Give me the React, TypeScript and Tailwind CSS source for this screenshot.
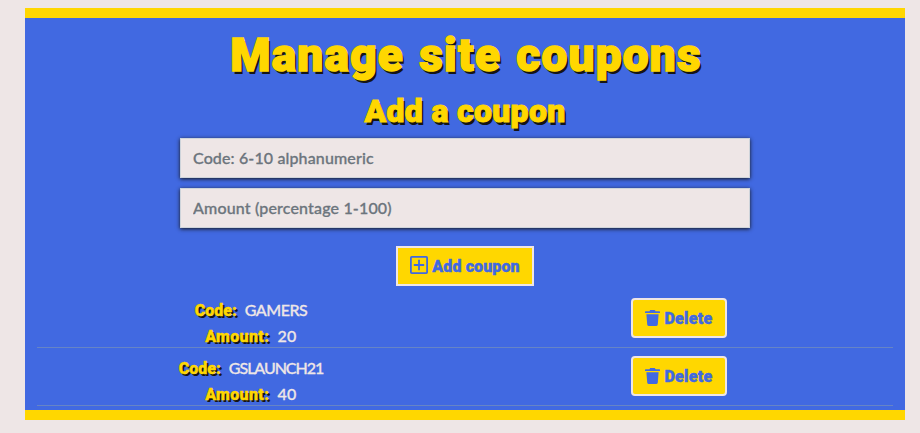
import React from "react";

const display = "font-['Roboto',sans-serif] font-black";
const body = "font-['Lato',sans-serif] font-medium [-webkit-text-stroke:0.3px_currentColor]";
const titleShadow = "[text-shadow:2px_3px_0_#151515]";
const labelShadow = "[text-shadow:2px_2px_0_#151515] [-webkit-text-stroke:0.4px_currentColor]";

function Field({ placeholder, tracking }: { placeholder: string; tracking: string }) {
  return (
    <input
      placeholder={placeholder}
      className={`block h-10 w-[570px] border border-[#ced4da] bg-[#eee6e6] px-3 pb-0.5 text-base text-[#6c757d] placeholder:text-[#6c757d] shadow-[0_1px_4px_#151515] outline-none ${body} ${tracking}`}
    />
  );
}

function TrashIcon() {
  return (
    <svg className="h-4 w-[15px] shrink-0" viewBox="0 0 15 16" fill="#4169e1">
      <path d="M5.2 0h4.6l.8 1.2H14.4q.6 0 .6.6V3H0V1.8q0-.6.6-.6h3.8z" />
      <path d="M1.4 4.2h12.2l-.8 10.4a1.4 1.4 0 0 1-1.4 1.4H3.6a1.4 1.4 0 0 1-1.4-1.4z" />
    </svg>
  );
}

function AddIcon() {
  return (
    <svg className="mb-0.5 h-[18px] w-[18px] shrink-0" viewBox="0 0 18 18" fill="none" stroke="#4169e1" strokeWidth="1.8">
      <rect x="0.9" y="0.9" width="16.2" height="16.2" rx="0.8" />
      <path d="M9 3.8v10.4M3.8 9h10.4" />
    </svg>
  );
}

type Coupon = { code: string; amount: number; tracking: string };

const coupons: Coupon[] = [
  { code: "GAMERS", amount: 20, tracking: "tracking-[-0.5px]" },
  { code: "GSLAUNCH21", amount: 40, tracking: "tracking-[-1.05px]" },
];

function Line({ label, value, tracking, labelTracking }: { label: string; value: string | number; tracking: string; labelTracking: string }) {
  return (
    <p className="flex h-[26px] items-center justify-center gap-2 whitespace-nowrap leading-[26px]">
      <span className={`${display} ${labelShadow} ${labelTracking} text-base text-[#ffd700]`}>{label}</span>
      <span className={`${body} mb-0.5 text-base text-[#eee6e6] ${tracking}`}>{value}</span>
    </p>
  );
}

function Row({ coupon }: { coupon: Coupon }) {
  return (
    <li className="flex h-[58px] border-b border-[#6684c5]">
      <div className="w-[428px] pt-2">
        <Line label="Code:" value={coupon.code} tracking={coupon.tracking} labelTracking="tracking-[0px]" />
        <Line label="Amount:" value={coupon.amount} tracking="tracking-[0.4px]" labelTracking="tracking-[0.35px]" />
      </div>
      <div className="flex w-[428px] justify-center pt-2">
        <button className={`flex h-10 w-24 items-center justify-center gap-1 rounded border-2 border-[#eee6e6] bg-[#ffd700] text-base tracking-[0.3px] text-[#4169e1] [-webkit-text-stroke:0.4px_currentColor] ${display}`}>
          <TrashIcon />
          <span className="pt-px">Delete</span>
        </button>
      </div>
    </li>
  );
}

export default function App() {
  return (
    <div className="h-[433px] overflow-hidden bg-[#eee6e6] pt-2 pr-[15px] pl-[25px]">
      <main className="flex h-[412px] flex-col items-center border-y-10 border-[#ffd700] bg-[#4169e1] px-3">
        <h1 className={`${display} ${titleShadow} mt-2 ml-0.5 h-[58px] whitespace-nowrap text-[46px] leading-[58px] tracking-[1.2px] [word-spacing:2.5px] text-[#ffd700] [-webkit-text-stroke:1.5px_currentColor]`}>
          Manage site coupons
        </h1>
        <h2 className={`${display} ${titleShadow} mt-2 h-[38px] whitespace-nowrap text-[32px] leading-[38px] tracking-[0.3px] text-[#ffd700] [-webkit-text-stroke:1px_currentColor]`}>
          Add a coupon
        </h2>
        <form className="mt-2 flex flex-col items-center gap-2.5">
          <Field placeholder="Code: 6-10 alphanumeric" tracking="tracking-[0.13px]" />
          <Field placeholder="Amount (percentage 1-100)" tracking="tracking-[0.16px]" />
          <button type="button" className={`mt-2 flex h-10 w-[138px] items-center justify-center gap-1 border-2 border-[#eee6e6] bg-[#ffd700] text-base tracking-[0.1px] whitespace-nowrap text-[#4169e1] [-webkit-text-stroke:0.4px_currentColor] ${display}`}>
            <AddIcon />
            <span className="pt-px">Add coupon</span>
          </button>
        </form>
        <ul className="mt-1 w-full">
          {coupons.map((coupon) => (
            <Row key={coupon.code} coupon={coupon} />
          ))}
        </ul>
      </main>
    </div>
  );
}
